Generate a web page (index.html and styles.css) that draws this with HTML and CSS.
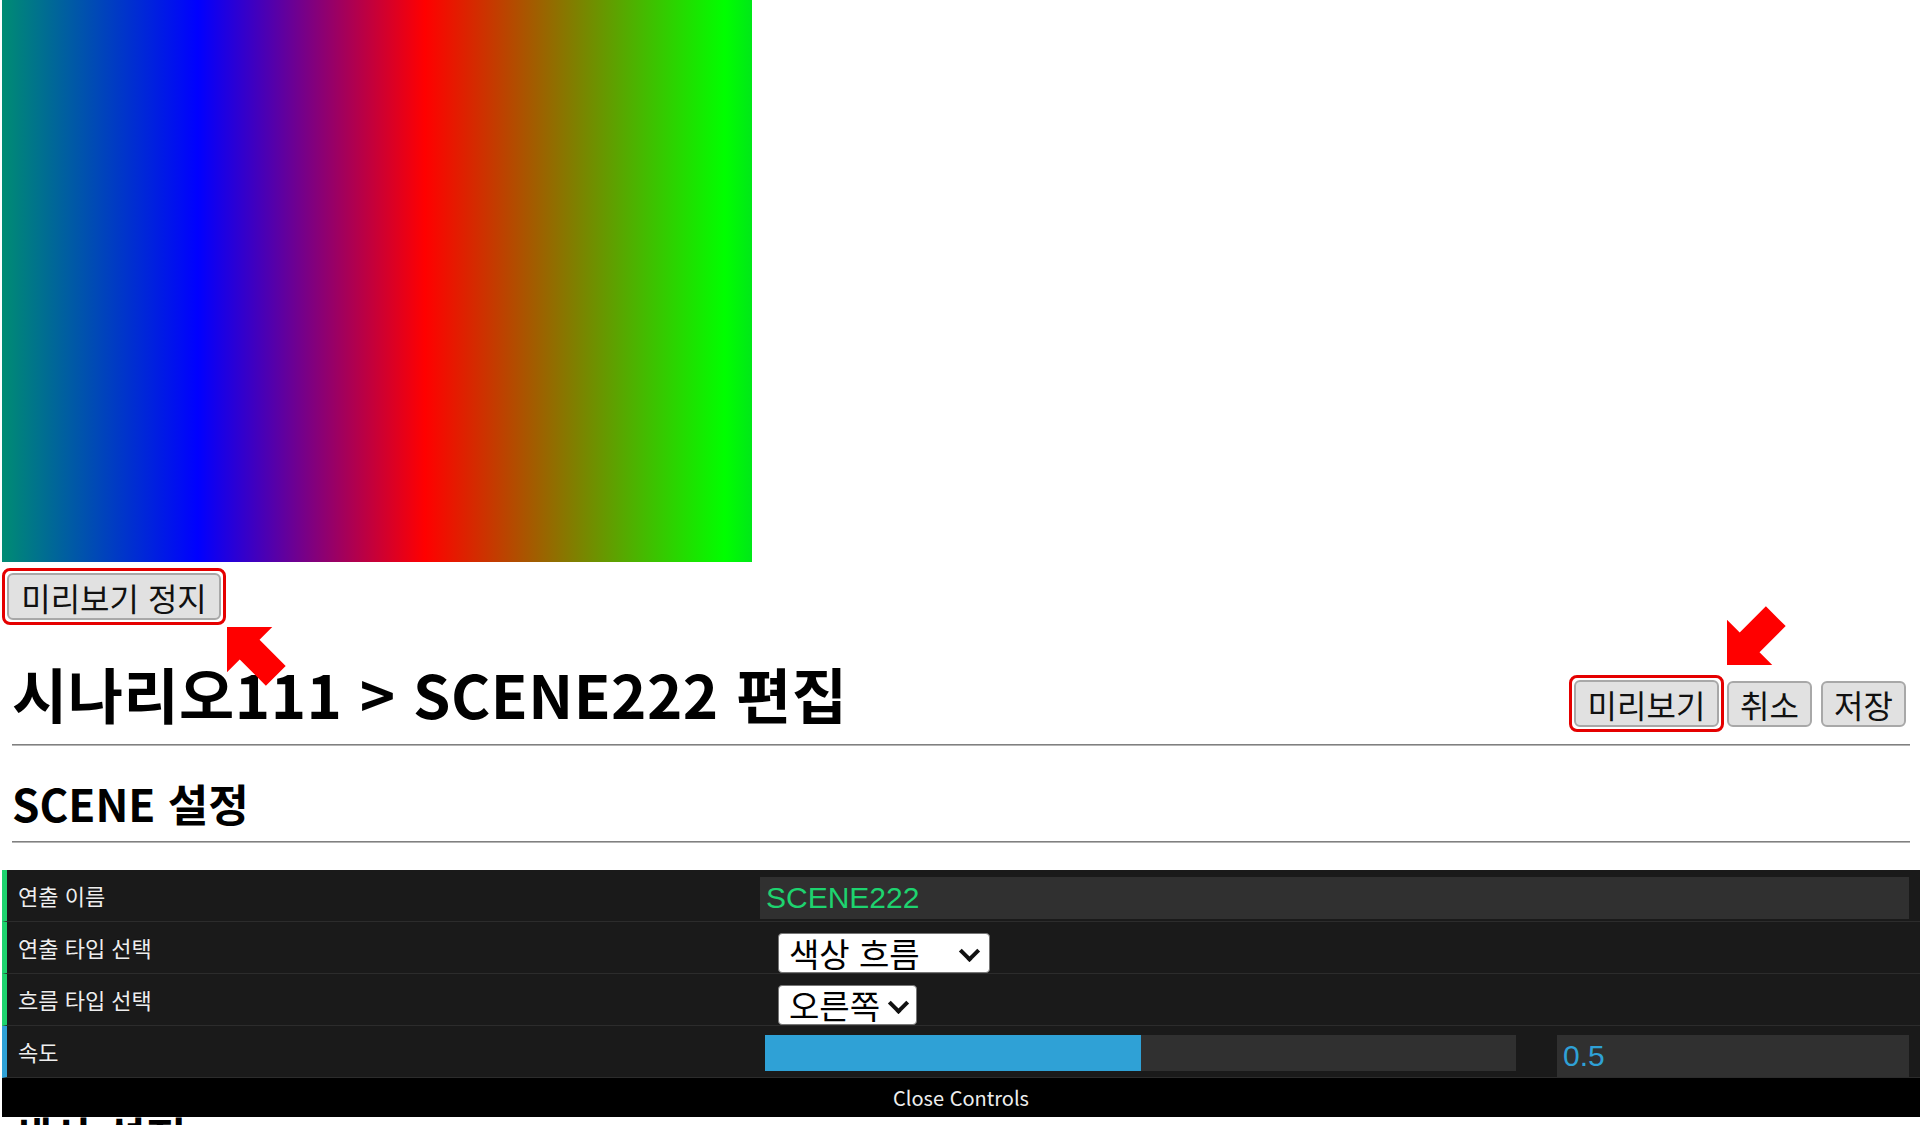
FILE: index.html
```html
<!DOCTYPE html>
<html lang="ko">
<head>
<meta charset="utf-8">
<title>SCENE 편집</title>
<link rel="stylesheet" href="styles.css">
</head>
<body>
<div class="page">
  <div class="preview"></div>
  <div class="preview-actions">
    <span class="hl"><button class="btn btn-stop">미리보기 정지</button></span>
  </div>

  <section class="editor">
    <header class="editor-head">
      <h1 class="title">시나리오111 &gt; SCENE222 편집</h1>
      <div class="actions">
        <span class="hl"><button class="btn btn-preview">미리보기</button></span>
        <button class="btn btn-sm btn-cancel">취소</button>
        <button class="btn btn-sm btn-save">저장</button>
      </div>
    </header>
    <hr class="rule">
    <h2 class="section-title">SCENE 설정</h2>
    <hr class="rule">
  </section>

  <div class="gui">
    <div class="gui-row">
      <span class="gui-label">연출 이름</span>
      <div class="gui-control">
        <input class="gui-text" type="text" value="SCENE222">
      </div>
    </div>
    <div class="gui-row">
      <span class="gui-label">연출 타입 선택</span>
      <div class="gui-control">
        <span class="select sel-type"><select><option>색상 흐름</option></select></span>
      </div>
    </div>
    <div class="gui-row">
      <span class="gui-label">흐름 타입 선택</span>
      <div class="gui-control">
        <span class="select sel-flow"><select><option>오른쪽</option></select></span>
      </div>
    </div>
    <div class="gui-row gui-num">
      <span class="gui-label">속도</span>
      <div class="gui-control gui-slider-wrap">
        <div class="gui-slider"><div class="gui-fill" style="width:50%"></div></div>
        <input class="gui-number" type="text" value="0.5">
      </div>
    </div>
    <div class="gui-close">Close Controls</div>
  </div>

  <section class="editor">
    <h2 class="section-title next">색상 설정</h2>
  </section>

  <svg class="arrow arrow-1" width="66" height="66" viewBox="0 0 66 66">
    <polygon points="3,3 48.25,3 35.53,15.73 61.69,41.89 41.89,61.69 15.73,35.53 3,48.25" fill="#ff0000"/>
  </svg>
  <svg class="arrow arrow-2" width="66" height="66" viewBox="0 0 66 66">
    <polygon points="3,63 48.25,63 35.53,50.27 61.69,24.11 41.89,4.31 15.73,30.47 3,17.75" fill="#ff0000"/>
  </svg>
</div>
</body>
</html>
```
FILE: styles.css
```css
* { box-sizing: border-box; }

html, body {
  margin: 0;
  padding: 0;
  background: #fff;
}

body {
  font-family: "Noto Sans CJK KR", "Noto Sans", sans-serif;
  color: #000;
  overflow: hidden;
}

.page {
  position: relative;
  height: 1125px;
  overflow: hidden;
  padding: 0 2px;
}

.preview {
  width: 750px;
  height: 562px;
  background: linear-gradient(90deg,
    rgb(0, 140, 115) 0px,
    #0000ff 196px,
    #ff0000 423px,
    #00ff00 723px,
    rgb(0, 232, 24) 750px);
}

.preview-actions {
  margin-top: 6px;
  display: flex;
}

.hl {
  display: inline-flex;
  padding: 2px;
  border: 3px solid #e50000;
  border-radius: 8px;
}

.btn {
  font-family: "Noto Sans CJK KR", sans-serif;
  font-size: 32px;
  height: 47px;
  padding: 0;
  margin: 0;
  background: #e1e1e1;
  border: 2px solid #a8a8a8;
  border-radius: 6px;
  color: #111;
  line-height: 1;
  display: inline-flex;
  align-items: center;
  justify-content: center;
  white-space: nowrap;
}

.btn-stop { width: 214px; }
.btn-preview { width: 145px; }
.btn-sm { width: 85px; height: 46px; }
.btn-cancel { margin-left: 3px; }
.btn-save { margin-left: 9px; }

.editor {
  padding: 0 10px;
}

.editor-head {
  display: flex;
  justify-content: space-between;
  align-items: flex-start;
  margin-top: 33px;
}

.title {
  margin: 0;
  font-size: 60px;
  line-height: 70px;
  font-weight: 700;
  letter-spacing: 0.5px;
  white-space: nowrap;
}

.actions {
  display: flex;
  align-items: center;
  margin-top: 17px;
  margin-right: 4px;
}

.rule {
  margin: 12px 0 0;
  height: 0;
  border: 0;
  border-top: 1px solid #808080;
  border-bottom: 1px solid #b4b4b4;
}

.section-title {
  margin: 31px 0 0;
  font-size: 44px;
  line-height: 52px;
  font-weight: 700;
}

.section-title.next {
  margin-top: 1px;
  line-height: 36px;
}

/* control panel */
.gui {
  margin-top: 27px;
  background: #1a1a1a;
  color: #eee;
}

.gui-row {
  display: grid;
  grid-template-columns: 742px 1fr;
  height: 52px;
  padding: 0 11px;
  border-left: 5px solid #1ed36f;
  border-bottom: 1px solid #2c2c2c;
}

.gui-num { border-left-color: #2fa1d6; }

.gui-label {
  font-size: 22px;
  line-height: 51px;
  white-space: nowrap;
  text-shadow: 0 -1px 0 #111;
}

.gui-control { min-width: 0; }

.gui-text {
  display: block;
  width: 100%;
  height: 42px;
  margin-top: 7px;
  padding: 0 6px;
  border: 0;
  outline: none;
  background: #303030;
  color: #1ed36f;
  font-family: "Liberation Sans", Arial, sans-serif;
  font-size: 30px;
}

.select {
  position: relative;
  display: inline-block;
  margin-top: 11px;
  margin-left: 18px;
}

.select select {
  appearance: none;
  -webkit-appearance: none;
  display: block;
  height: 40px;
  margin: 0;
  padding: 0 0 0 10px;
  border: 1px solid #767676;
  border-radius: 4px;
  background: #fff;
  color: #000;
  font-family: "Noto Sans CJK KR", sans-serif;
  font-size: 33px;
  line-height: 38px;
}

.sel-type select { width: 212px; }
.sel-flow select { width: 139px; }

.select::after {
  content: "";
  position: absolute;
  right: 13px;
  top: 11px;
  width: 11px;
  height: 11px;
  border-right: 4px solid #111;
  border-bottom: 4px solid #111;
  transform: rotate(45deg);
  pointer-events: none;
}

.sel-flow::after { right: 11px; }

.gui-slider-wrap {
  display: flex;
  align-items: flex-start;
}

.gui-slider {
  flex: 0 0 751px;
  height: 36px;
  margin-top: 9px;
  margin-left: 5px;
  background: #303030;
}

.gui-fill {
  height: 100%;
  background: #2fa1d6;
}

.gui-number {
  flex: 0 0 352px;
  width: 352px;
  height: 42px;
  margin-top: 9px;
  margin-left: auto;
  padding: 0 6px;
  border: 0;
  outline: none;
  background: #303030;
  color: #2fa1d6;
  font-family: "Liberation Sans", Arial, sans-serif;
  font-size: 30px;
}

.gui-close {
  height: 39px;
  line-height: 39px;
  background: #000;
  color: #eee;
  text-align: center;
  font-size: 20px;
}

/* annotation arrows */
.arrow {
  position: absolute;
}

.arrow-1 { left: 224px; top: 624px; }
.arrow-2 { left: 1724px; top: 602px; }
```
